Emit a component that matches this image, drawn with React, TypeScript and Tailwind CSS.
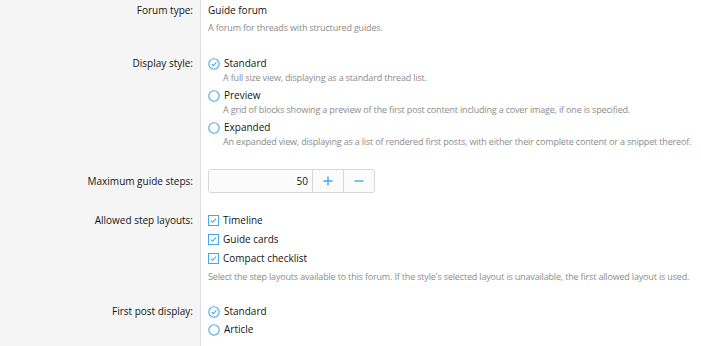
import React from "react";

const font = { fontFamily: '"Open Sans", "Noto Sans", sans-serif' };

const mainText = "text-[10px] leading-[15px] text-[#141414]";
const descText = "text-[9px] leading-[14px] tracking-[-0.17px] text-[#8c8c8c]";

function RadioIcon({ checked }: { checked?: boolean }) {
  return (
    <svg width="12" height="12" viewBox="0 0 12 12" className="shrink-0">
      <circle cx="6" cy="6" r="5.2" fill="none" stroke="#47a7eb" strokeWidth="1.1" />
      {checked && (
        <path d="M3.6 6.1 L5.3 7.7 L8.4 4.4" fill="none" stroke="#47a7eb" strokeWidth="1.1" />
      )}
    </svg>
  );
}

function CheckIcon() {
  return (
    <svg width="11" height="11" viewBox="0 0 11 11" className="shrink-0">
      <rect x="0.5" y="0.5" width="10" height="10" fill="#fff" stroke="#47a7eb" strokeWidth="1" />
      <path d="M2.8 5.6 L4.6 7.3 L8 3.6" fill="none" stroke="#47a7eb" strokeWidth="1.1" />
    </svg>
  );
}

function Row({
  label,
  children,
  className = "py-[10px]",
  labelClass = "",
}: {
  label: string;
  children: React.ReactNode;
  className?: string;
  labelClass?: string;
}) {
  return (
    <div className="grid grid-cols-[201px_1fr]">
      <div
        className={`bg-[#f5f5f5] border-r border-[#dfdfdf] pr-[7px] text-right ${mainText} ${className} ${labelClass}`}
      >
        {label}
      </div>
      <div className={`pl-[7px] ${className}`}>{children}</div>
    </div>
  );
}

function Radio({ label, desc, checked }: { label: string; desc?: string; checked?: boolean }) {
  return (
    <div className="mb-[3px]">
      <div className={`flex items-center gap-[4px] ${mainText}`}>
        <RadioIcon checked={checked} />
        <span>{label}</span>
      </div>
      {desc && <div className={`pl-[15px] ${descText}`}>{desc}</div>}
    </div>
  );
}

function Check({ label }: { label: string }) {
  return (
    <div className={`flex items-center gap-[4px] mb-[4px] ${mainText}`}>
      <CheckIcon />
      <span>{label}</span>
    </div>
  );
}

export default function App() {
  return (
    <div className="w-[701px] h-[346px] bg-white overflow-hidden" style={font}>
      <Row label="Forum type:" className="pt-[3px] pb-[10px]">
        <div className={mainText}>Guide forum</div>
        <div className={`mt-[3px] ${descText}`}>A forum for threads with structured guides.</div>
      </Row>

      <Row label="Display style:" className="pt-[11px] pb-[7px]">
        <Radio
          checked
          label="Standard"
          desc="A full size view, displaying as a standard thread list."
        />
        <Radio
          label="Preview"
          desc="A grid of blocks showing a preview of the first post content including a cover image, if one is specified."
        />
        <Radio
          label="Expanded"
          desc="An expanded view, displaying as a list of rendered first posts, with either their complete content or a snippet thereof."
        />
      </Row>

      <Row label="Maximum guide steps:" className="py-[10px]" labelClass="!pt-[15px]">
        <div className="flex w-[167px] h-[24px] rounded-[3px] border border-[#d8d8d8] bg-[#fbfbfb] text-[10px] text-[#141414]">
          <div className="flex-1 flex items-center justify-end pr-[4px]">50</div>
          <button className="w-[31px] flex items-center justify-center border-l border-[#d8d8d8]">
            <svg width="10" height="10" viewBox="0 0 10 10">
              <path d="M5 0.5 V9.5 M0.5 5 H9.5" stroke="#47a7eb" strokeWidth="1.4" />
            </svg>
          </button>
          <button className="w-[31px] flex items-center justify-center border-l border-[#d8d8d8]">
            <svg width="10" height="10" viewBox="0 0 10 10">
              <path d="M0.5 5 H9.5" stroke="#47a7eb" strokeWidth="1.4" />
            </svg>
          </button>
        </div>
      </Row>

      <Row label="Allowed step layouts:" className="pt-[10px] pb-[10px]">
        <Check label="Timeline" />
        <Check label="Guide cards" />
        <Check label="Compact checklist" />
        <div className={descText}>
          Select the step layouts available to this forum. If the style's selected layout is unavailable, the first allowed layout is used.
        </div>
      </Row>

      <Row label="First post display:" className="pt-[10px] pb-[20px]">
        <Radio checked label="Standard" />
        <Radio label="Article" />
      </Row>
    </div>
  );
}
